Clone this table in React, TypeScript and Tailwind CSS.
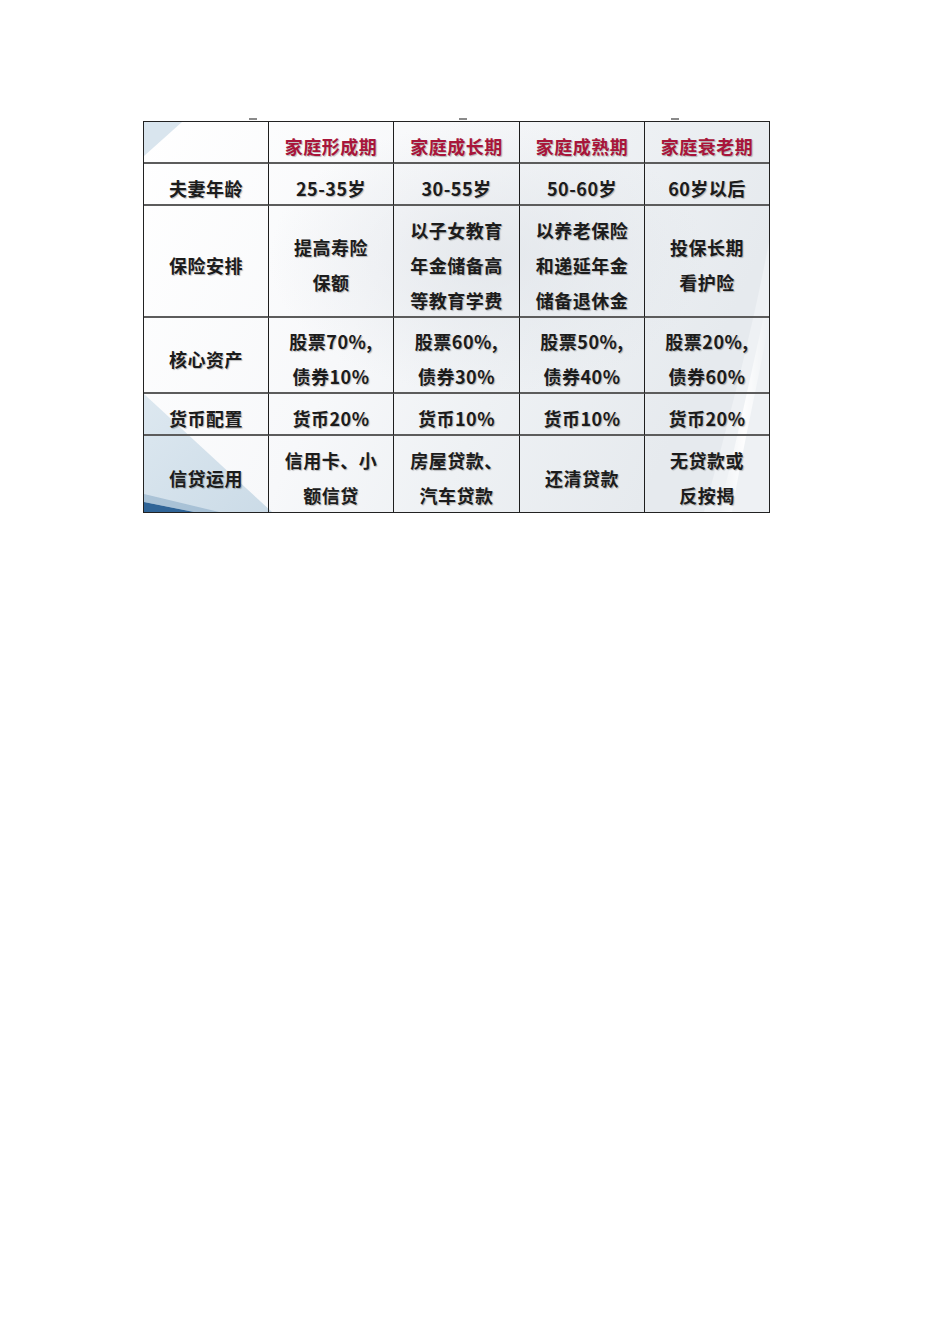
import React from "react";

const font = { fontFamily: '"Noto Sans CJK SC", "Noto Sans", sans-serif' };

const headers = ["家庭形成期", "家庭成长期", "家庭成熟期", "家庭衰老期"];

const rows: { label: string; cells: string[][] }[] = [
  { label: "夫妻年龄", cells: [["25-35岁"], ["30-55岁"], ["50-60岁"], ["60岁以后"]] },
  {
    label: "保险安排",
    cells: [
      ["提高寿险", "保额"],
      ["以子女教育", "年金储备高", "等教育学费"],
      ["以养老保险", "和递延年金", "储备退休金"],
      ["投保长期", "看护险"],
    ],
  },
  {
    label: "核心资产",
    cells: [
      ["股票70%,", "债券10%"],
      ["股票60%,", "债券30%"],
      ["股票50%,", "债券40%"],
      ["股票20%,", "债券60%"],
    ],
  },
  { label: "货币配置", cells: [["货币20%"], ["货币10%"], ["货币10%"], ["货币20%"]] },
  {
    label: "信贷运用",
    cells: [["信用卡、小", "额信贷"], ["房屋贷款、", "汽车贷款"], ["还清贷款"], ["无贷款或", "反按揭"]],
  },
];

function Cell({
  lines,
  last,
  lastRow,
  red,
}: {
  lines: string[];
  last?: boolean;
  lastRow?: boolean;
  red?: boolean;
}) {
  return (
    <div
      className={`flex flex-col items-center justify-center pt-[8px] text-[18px] font-bold leading-[35px] tracking-[0.5px] [text-shadow:1px_1px_1px_rgba(0,0,0,0.25)] ${
        last ? "" : "border-r border-r-[#1e1e1e]"
      } ${lastRow ? "" : "border-b-2 border-b-[#5c5c5c]"} ${red ? "text-[#a8153a]" : "text-[#1c1c1c]"}`}
    >
      {lines.map((l, i) => (
        <div key={i} className="whitespace-nowrap">
          {l}
        </div>
      ))}
    </div>
  );
}

export default function App() {
  return (
    <div className="w-[950px] h-[1344px] bg-white" style={font}>
      <div className="pt-[118px] pl-[143px]">
        <div className="relative w-[627px]">
          <div className="absolute left-[106px] top-0 h-[2px] w-[8px] bg-[#8a8a8a]" />
          <div className="absolute left-[316px] top-0 h-[2px] w-[8px] bg-[#8a8a8a]" />
          <div className="absolute left-[528px] top-0 h-[2px] w-[8px] bg-[#8a8a8a]" />
          <div className="pt-[3px]">
            <div className="relative border border-[#222]">
              <svg
                className="absolute inset-0 h-full w-full"
                viewBox="0 0 625 390"
                preserveAspectRatio="none"
              >
                <defs>
                  <linearGradient id="base" x1="0" y1="0" x2="1" y2="0.3">
                    <stop offset="0" stopColor="#ffffff" />
                    <stop offset="0.45" stopColor="#f7f8fa" />
                    <stop offset="0.7" stopColor="#eef1f4" />
                    <stop offset="1" stopColor="#e6eaee" />
                  </linearGradient>
                  <linearGradient id="blue" x1="0" y1="0" x2="1" y2="1">
                    <stop offset="0" stopColor="#dde8f0" />
                    <stop offset="1" stopColor="#cbdbe7" />
                  </linearGradient>
                  <linearGradient id="swoosh" x1="0" y1="0" x2="1" y2="0">
                    <stop offset="0" stopColor="#ffffff" stopOpacity="0" />
                    <stop offset="0.5" stopColor="#ffffff" stopOpacity="0.9" />
                    <stop offset="1" stopColor="#ffffff" stopOpacity="0" />
                  </linearGradient>
                  <radialGradient id="shade" cx="0.55" cy="0.35" r="0.35">
                    <stop offset="0" stopColor="#dfe3e8" stopOpacity="0.7" />
                    <stop offset="1" stopColor="#dfe3e8" stopOpacity="0" />
                  </radialGradient>
                </defs>
                <rect x="0" y="0" width="625" height="390" fill="url(#base)" />
                <rect x="0" y="0" width="625" height="390" fill="url(#shade)" />
                <path d="M560 390 C 585 300, 610 200, 625 120 L 625 390 Z" fill="#eef1f4" />
                <path d="M575 390 C 595 310, 612 230, 625 170 L 625 200 C 614 260, 598 330, 588 390 Z" fill="url(#swoosh)" />
                <path d="M0 0 L 38 0 L 0 34 Z" fill="#d9e5ee" />
                <path d="M0 272 L 128 390 L 0 390 Z" fill="url(#blue)" />
                <path d="M0 380 L 50 390 L 0 390 Z" fill="#2f6497" />
                <path d="M0 372 L 75 390 L 50 390 L 0 380 Z" fill="#7fa3c2" opacity="0.5" />
              </svg>
              <div className="relative grid grid-cols-[125px_125px_126px_125px_124px] grid-rows-[42px_42px_112px_76px_42px_76px]">
                <Cell lines={[""]} />
                {headers.map((h, i) => (
                  <Cell key={h} lines={[h]} red last={i === 3} />
                ))}
                {rows.map((r, ri) => (
                  <React.Fragment key={r.label}>
                    <Cell lines={[r.label]} lastRow={ri === rows.length - 1} />
                    {r.cells.map((c, ci) => (
                      <Cell
                        key={ci}
                        lines={c}
                        last={ci === 3}
                        lastRow={ri === rows.length - 1}
                      />
                    ))}
                  </React.Fragment>
                ))}
              </div>
            </div>
          </div>
        </div>
      </div>
    </div>
  );
}
